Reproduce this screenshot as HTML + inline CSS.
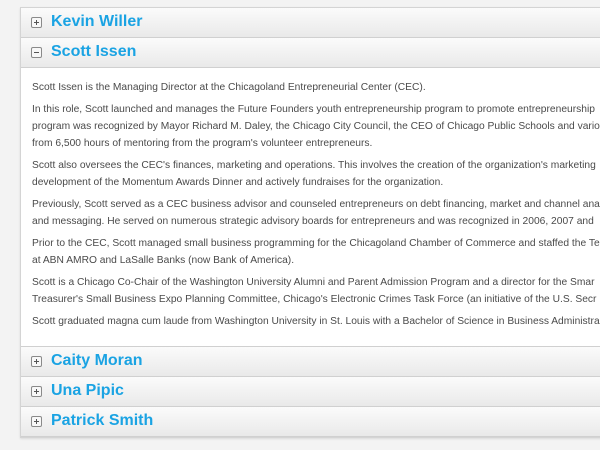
<!DOCTYPE html>
<html><head><style>
body{margin:0;width:600px;height:450px;overflow:hidden;background:#f3f3f3;font-family:"Liberation Sans",Arial,sans-serif}
.wrap{position:absolute;left:20px;top:7px;width:600px;border:1px solid #d4d4d4;border-right:none;background:#fff;box-shadow:0 1px 2px rgba(0,0,0,.1)}
.h{height:29px;border-bottom:1px solid #d0d0d0;background:linear-gradient(#fbfbfb,#e9e9e9);position:relative}
.h span{position:absolute;left:30px;top:5px;font-size:16px;font-weight:bold;color:#1aa3e3}
.ic{position:absolute;left:10px;top:9px;width:9px;height:9px;border:1px solid #8a8a8a;border-radius:2px;background:#f8f8f8}
.ic:before{content:"";position:absolute;left:2px;top:4px;width:5px;height:1px;background:#555}
.ic.p:after{content:"";position:absolute;left:4px;top:2px;width:1px;height:5px;background:#555}
.b{height:278px;border-bottom:1px solid #d0d0d0;padding:0 0 0 11px;font-size:10.25px;color:#4a4a4a;line-height:17px;white-space:nowrap;overflow:hidden}
.b p{margin:0 0 5px}
.b p:first-child{margin-top:11px}
</style></head><body>
<div class="wrap">
<div class="h"><div class="ic p"></div><span>Kevin Willer</span></div>
<div class="h"><div class="ic"></div><span>Scott Issen</span></div>
<div class="b">
<p>Scott Issen is the Managing Director at the Chicagoland Entrepreneurial Center (CEC).</p>
<p>In this role, Scott launched and manages the Future Founders youth entrepreneurship program to promote entrepreneurship<br>program was recognized by Mayor Richard M. Daley, the Chicago City Council, the CEO of Chicago Public Schools and various<br>from 6,500 hours of mentoring from the program's volunteer entrepreneurs.</p>
<p>Scott also oversees the CEC's finances, marketing and operations. This involves the creation of the organization's marketing<br>development of the Momentum Awards Dinner and actively fundraises for the organization.</p>
<p>Previously, Scott served as a CEC business advisor and counseled entrepreneurs on debt financing, market and channel analysis<br>and messaging. He served on numerous strategic advisory boards for entrepreneurs and was recognized in 2006, 2007 and</p>
<p>Prior to the CEC, Scott managed small business programming for the Chicagoland Chamber of Commerce and staffed the Te<br>at ABN AMRO and LaSalle Banks (now Bank of America).</p>
<p>Scott is a Chicago Co-Chair of the Washington University Alumni and Parent Admission Program and a director for the Smar<br>Treasurer's Small Business Expo Planning Committee, Chicago's Electronic Crimes Task Force (an initiative of the U.S. Secr</p>
<p>Scott graduated magna cum laude from Washington University in St. Louis with a Bachelor of Science in Business Administra</p>
</div>
<div class="h"><div class="ic p"></div><span>Caity Moran</span></div>
<div class="h"><div class="ic p"></div><span>Una Pipic</span></div>
<div class="h"><div class="ic p"></div><span>Patrick Smith</span></div>
</div>
</body></html>
